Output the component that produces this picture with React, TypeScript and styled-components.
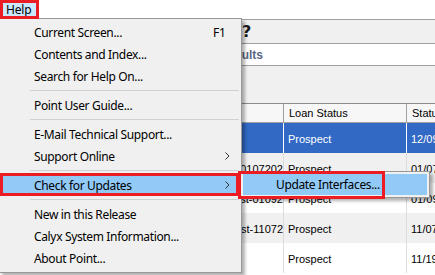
import styled, { createGlobalStyle } from "styled-components";

const GlobalStyle = createGlobalStyle`
  html, body {
    margin: 0;
    padding: 0;
    background: #ffffff;
    overflow: hidden;
  }
  body {
    font-family: "Noto Sans", "Segoe UI", sans-serif;
    font-size: 12px;
    color: #000000;
  }
`;

type Row = { loan: string; status: string; date: string; selected?: boolean };

const rows: Row[] = [
  { loan: "", status: "Prospect", date: "12/09/2019", selected: true },
  { loan: "Loan-0107202", status: "Prospect", date: "01/07/2020" },
  { loan: "Test-01092", status: "Prospect", date: "01/09/2020" },
  { loan: "Test-11072", status: "Prospect", date: "11/07/2019" },
  { loan: "", status: "Prospect", date: "11/19/2019" },
];

type Entry =
  | { kind: "item"; label: string; shortcut?: string; sub?: boolean; active?: boolean }
  | { kind: "sep" };

const helpMenu: Entry[] = [
  { kind: "item", label: "Current Screen...", shortcut: "F1" },
  { kind: "item", label: "Contents and Index..." },
  { kind: "item", label: "Search for Help On..." },
  { kind: "sep" },
  { kind: "item", label: "Point User Guide..." },
  { kind: "sep" },
  { kind: "item", label: "E-Mail Technical Support..." },
  { kind: "item", label: "Support Online", sub: true },
  { kind: "sep" },
  { kind: "item", label: "Check for Updates", sub: true, active: true },
  { kind: "sep" },
  { kind: "item", label: "New in this Release" },
  { kind: "item", label: "Calyx System Information..." },
  { kind: "item", label: "About Point..." },
];

function Chevron() {
  return (
    <svg width="5" height="8" viewBox="0 0 5 8">
      <polyline points="0.5,0.5 4,4 0.5,7.5" fill="none" stroke="#333" strokeWidth="1" />
    </svg>
  );
}

export default function App() {
  return (
    <Screen>
      <GlobalStyle />
      <MenuBar>
        <MenuTitle>Help</MenuTitle>
      </MenuBar>

      <Workspace>
        <Toolbar>
          <ToolGlyph>?</ToolGlyph>
        </Toolbar>
        <TitleStrip>
          <TitleText>Pipeline Search Results</TitleText>
        </TitleStrip>
        <Filler />
        <Grid>
          <HeadCell />
          <HeadCell>Loan Status</HeadCell>
          <HeadCell>Status Date</HeadCell>
          {rows.map((r, i) => (
            <GridRow key={i} $selected={!!r.selected} $odd={i % 2 === 1}>
              <Cell $align="right">{r.loan}</Cell>
              <Cell>{r.status}</Cell>
              <Cell>{r.date}</Cell>
            </GridRow>
          ))}
        </Grid>
      </Workspace>

      <Dropdown>
        {helpMenu.map((e, i) =>
          e.kind === "sep" ? (
            <Separator key={i} />
          ) : (
            <MenuItem key={i} $active={!!e.active}>
              <span>{e.label}</span>
              <Shortcut>{e.shortcut}</Shortcut>
              <Arrow>{e.sub && <Chevron />}</Arrow>
            </MenuItem>
          )
        )}
      </Dropdown>

      <Submenu>
        <SubItem>Update Interfaces...</SubItem>
      </Submenu>

      <Callout $x={0} $y={0} $w={39} $h={19} />
      <Callout $x={0} $y={173} $w={239} $h={23} />
      <Callout $x={238} $y={171} $w={147} $h={28} />
    </Screen>
  );
}

const Screen = styled.div`
  position: relative;
  width: 435px;
  height: 275px;
  overflow: hidden;
  background: #ffffff;
`;

const MenuBar = styled.div`
  height: 19px;
  display: flex;
  align-items: stretch;
  background: #ffffff;
`;

const MenuTitle = styled.div`
  background: #cce8ff;
  padding: 0 8px 0 6px;
  display: flex;
  align-items: center;
  font-size: 12px;
  letter-spacing: -0.2px;
`;

const Workspace = styled.div`
  display: flex;
  flex-direction: column;
  background: #f0f0f0;
`;

const Toolbar = styled.div`
  height: 23px;
  border-top: 1px solid #a0a0a0;
  border-bottom: 1px solid #a0a0a0;
  display: flex;
  align-items: center;
  padding-left: 242px;
`;

const ToolGlyph = styled.span`
  font-family: "DejaVu Sans", sans-serif;
  font-weight: bold;
  font-size: 16px;
  color: #1a1a1a;
`;

const TitleStrip = styled.div`
  height: 21px;
  background: #ffffff;
  border-bottom: 1px solid #a0a0a0;
  display: flex;
  align-items: center;
`;

const TitleText = styled.div`
  width: 263px;
  text-align: right;
  white-space: nowrap;
  overflow: hidden;
  font-family: "Liberation Sans", Arial, sans-serif;
  font-weight: bold;
  font-size: 12px;
  color: #5a6784;
`;

const Filler = styled.div`
  height: 37px;
`;

const Grid = styled.div`
  display: grid;
  grid-template-columns: 283px 123px 1fr;
  border-top: 1px solid #8c8c8c;
  font-family: "Liberation Sans", Arial, sans-serif;
  font-size: 11px;
`;

const HeadCell = styled.div`
  height: 18px;
  display: flex;
  align-items: center;
  padding-left: 5px;
  background: #f7f7f7;
  border-left: 1px solid #a0a0a0;
  border-bottom: 1px solid #a0a0a0;
  white-space: nowrap;
  overflow: hidden;
`;

const GridRow = styled.div<{ $selected: boolean; $odd: boolean }>`
  display: contents;
  & > div {
    background: ${({ $selected, $odd }) =>
      $selected ? "#3169c5" : $odd ? "#f0f0f0" : "#ffffff"};
    color: ${({ $selected }) => ($selected ? "#ffffff" : "#000000")};
    border-left: 1px solid ${({ $selected }) => ($selected ? "#ffffff" : "#dcdcdc")};
  }
`;

const Cell = styled.div<{ $align?: "left" | "right" }>`
  height: 30px;
  display: flex;
  align-items: center;
  justify-content: ${({ $align }) => ($align === "right" ? "flex-end" : "flex-start")};
  padding: 2px 0 0 4px;
  box-sizing: border-box;
  white-space: nowrap;
  overflow: hidden;
`;

const Dropdown = styled.div`
  position: absolute;
  top: 18px;
  left: -1px;
  width: 241px;
  padding: 2px 0 3px;
  background: #f0f0f0;
  border: 1px solid #979797;
  box-shadow: 3px 3px 3px rgba(0, 0, 0, 0.3);
  letter-spacing: -0.35px;
`;

const MenuItem = styled.div<{ $active: boolean }>`
  height: 22px;
  margin: 0 2px;
  padding: 0 6px 0 32px;
  display: grid;
  grid-template-columns: 179px 1fr 8px;
  align-items: center;
  background: ${({ $active }) => ($active ? "#91c9f7" : "transparent")};
  white-space: nowrap;
`;

const Shortcut = styled.span``;

const Arrow = styled.span`
  display: flex;
  align-items: center;
`;

const Separator = styled.div`
  height: 7px;
  margin-left: 30px;
  margin-right: 2px;
  display: flex;
  align-items: center;
  &::after {
    content: "";
    flex: 1;
    height: 1px;
    background: #d0d0d0;
  }
`;

const Submenu = styled.div`
  position: absolute;
  top: 171px;
  left: 240px;
  width: 188px;
  padding: 2px 0;
  background: #f0f0f0;
  border: 1px solid #979797;
  box-shadow: 3px 3px 3px rgba(0, 0, 0, 0.3);
  letter-spacing: -0.35px;
`;

const SubItem = styled.div`
  height: 21px;
  margin: 0 2px;
  padding-left: 33px;
  display: flex;
  align-items: center;
  background: #91c9f7;
`;

const Callout = styled.div<{ $x: number; $y: number; $w: number; $h: number }>`
  position: absolute;
  left: ${({ $x }) => $x}px;
  top: ${({ $y }) => $y}px;
  width: ${({ $w }) => $w}px;
  height: ${({ $h }) => $h}px;
  box-sizing: border-box;
  border: 3px solid #ec1c24;
  pointer-events: none;
`;
